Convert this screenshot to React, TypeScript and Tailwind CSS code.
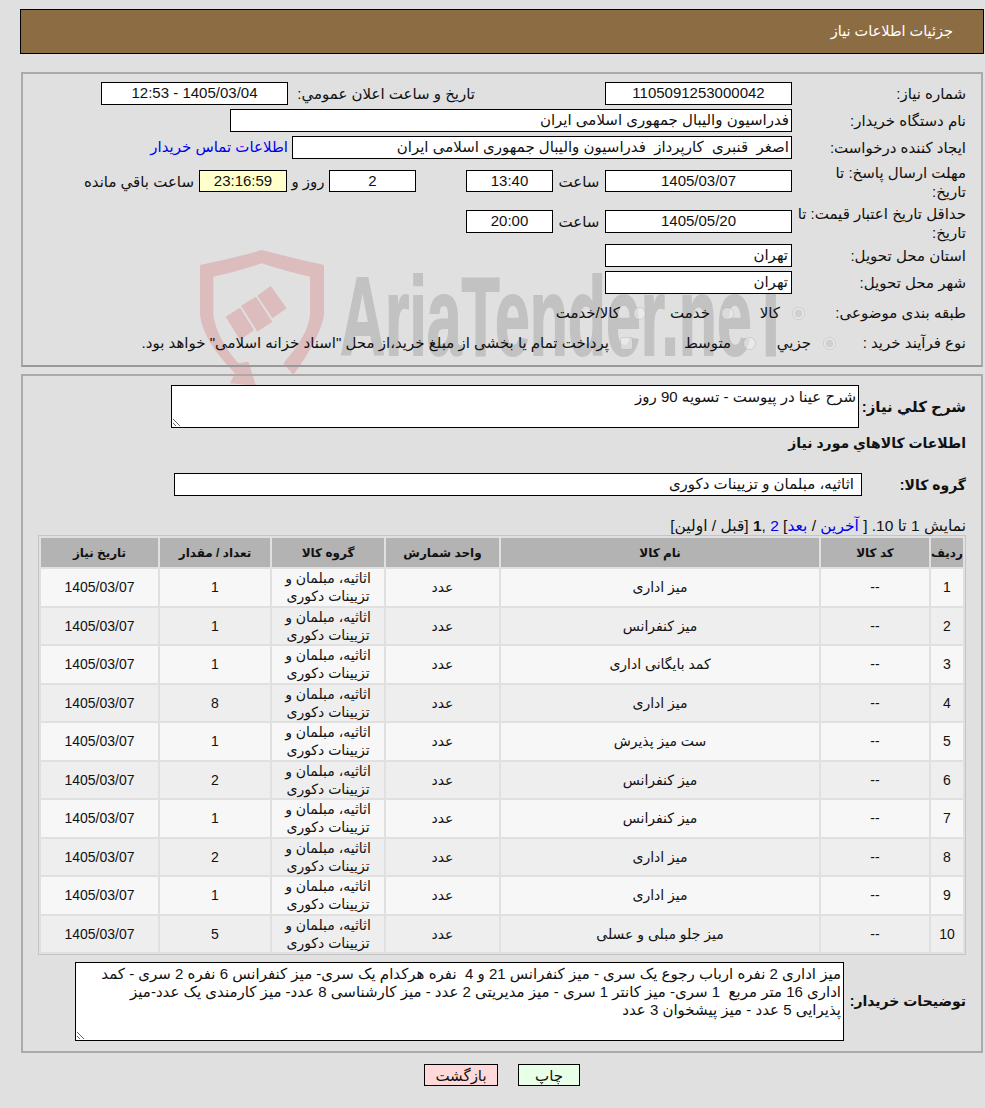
import React from 'react'

const rows = [
  ['1', 'میز اداری', '1'],
  ['2', 'میز کنفرانس', '1'],
  ['3', 'کمد بایگانی اداری', '1'],
  ['4', 'میز اداری', '8'],
  ['5', 'ست میز پذیرش', '1'],
  ['6', 'میز کنفرانس', '2'],
  ['7', 'میز کنفرانس', '1'],
  ['8', 'میز اداری', '2'],
  ['9', 'میز اداری', '1'],
  ['10', 'میز جلو مبلی و عسلی', '5'],
]

function Box({ className, children }: { className: string; children: React.ReactNode }) {
  return <div className={`shrink-0 h-full border border-black flex items-center justify-center ${className}`}>{children}</div>
}

function Watermark() {
  return (
    <div className="absolute left-0 top-0 w-[985px] h-[400px] overflow-hidden" dir="ltr">
      {/* shield + gavel, coordinates taken from the crop */}
      <svg className="absolute left-[180px] top-[235px] w-[260px] h-[160px]" viewBox="0 0 780 480">
        <path
          fill="#dcbcbc"
          d="M60 90 Q160 70 245 45 Q340 70 432 90 L432 240 Q420 310 340 420 L310 385 Q385 300 390 240 L390 125 Q320 110 245 85 Q170 110 100 125 L100 240 Q110 310 175 385 L205 380 L228 452 L150 445 L165 415 Q70 320 60 240 Z"
        />
        <path fill="#dcbcbc" d="M137 245 L180 218 L222 285 L180 315 Z" />
        <path fill="#dcbcbc" d="M183 212 L228 185 L277 260 L232 290 Z" />
        <path fill="#dcbcbc" d="M232 182 L272 153 L320 220 L277 250 Z" />
      </svg>
      <svg className="absolute left-[330px] top-[250px] w-[480px] h-[120px]" viewBox="0 0 480 120">
        <text
          transform="translate(10 105) scale(0.5575 1)"
          fontFamily="'Liberation Sans', sans-serif"
          fontWeight="700"
          fontSize="112"
          fill="#c2c2c2"
          stroke="#c2c2c2"
          strokeWidth="2"
        >
          AriaTender.neT
        </text>
      </svg>
    </div>
  )
}

export default function App() {
  return (
    <div
      dir="rtl"
      className="relative w-[985px] h-[1108px] overflow-hidden bg-[#e0e0e0] text-[15px] text-[#111] font-['Liberation_Sans','DejaVu_Sans',sans-serif]"
    >
      <Watermark />
      <div className="relative pt-[9px]">
        {/* page title */}
        <div className="ml-[20px] mr-px h-[45px] bg-[#8c6c42] border border-black flex items-center pr-[30px] text-white text-[14.5px]">
          جزئیات اطلاعات نیاز
        </div>

        {/* need details */}
        <div className="ml-[21px] mr-[2px] mt-[18px] h-[295px] border-2 border-[#aaa] border-b-[#999] pr-[15px] pt-[8px]">
          <div className="flex items-center h-[23px]">
            <div className="w-[174px] shrink-0 pt-[2px]">شماره نیاز:</div>
            <Box className="w-[187px] bg-white">1105091253000042</Box>
            <div className="w-[130px] shrink-0" />
            <div className="w-[187px] shrink-0 pt-[2px] whitespace-nowrap">تاریخ و ساعت اعلان عمومي:</div>
            <Box className="w-[187px] bg-white">1405/03/04 - 12:53</Box>
          </div>
          <div className="flex items-center h-[23px] mt-[4px]">
            <div className="w-[174px] shrink-0 pt-[2px]">نام دستگاه خریدار:</div>
            <Box className="w-[562px] bg-white !justify-start pr-[2px]">فدراسیون والیبال جمهوری اسلامی ایران</Box>
          </div>
          <div className="flex items-center h-[23px] mt-[4px]">
            <div className="w-[174px] shrink-0 pt-[2px]">ایجاد کننده درخواست:</div>
            <Box className="w-[500px] bg-white !justify-start pr-[2px] whitespace-pre">اصغر  قنبری  کارپرداز  فدراسیون والیبال جمهوری اسلامی ایران</Box>
            <a className="mr-[4px] text-[#0000ee] whitespace-nowrap">اطلاعات تماس خریدار</a>
          </div>
          <div className="flex items-center h-[22px] mt-[11px]">
            <div className="w-[174px] shrink-0 pt-[2px] leading-[19px]">مهلت ارسال پاسخ: تا<br />تاریخ:</div>
            <Box className="w-[187px] bg-white">1405/03/07</Box>
            <div className="w-[52px] shrink-0 pt-[2px] text-center">ساعت</div>
            <Box className="w-[87px] bg-white">13:40</Box>
            <div className="w-[50px] shrink-0" />
            <Box className="w-[87px] bg-white">2</Box>
            <div className="w-[42px] shrink-0 pt-[2px] text-center">روز و</div>
            <Box className="w-[88px] bg-[#ffffcc]">23:16:59</Box>
            <div className="mr-[5px] pt-[2px] whitespace-nowrap">ساعت باقي مانده</div>
          </div>
          <div className="flex items-center h-[23px] mt-[18px]">
            <div className="w-[174px] shrink-0 pt-[2px] leading-[19px]">حداقل تاریخ اعتبار قیمت: تا<br />تاریخ:</div>
            <Box className="w-[187px] bg-white">1405/05/20</Box>
            <div className="w-[52px] shrink-0 pt-[2px] text-center">ساعت</div>
            <Box className="w-[87px] bg-white">20:00</Box>
          </div>
          <div className="flex items-center h-[23px] mt-[11px]">
            <div className="w-[174px] shrink-0 pt-[2px]">استان محل تحویل:</div>
            <Box className="w-[187px] bg-white !justify-start pr-[3px]">تهران</Box>
          </div>
          <div className="flex items-center h-[23px] mt-[4px]">
            <div className="w-[174px] shrink-0 pt-[2px]">شهر محل تحویل:</div>
            <Box className="w-[187px] bg-white !justify-start pr-[3px]">تهران</Box>
          </div>
          <div className="flex items-center h-[22px] mt-[8px]">
            <div className="w-[161px] shrink-0 whitespace-nowrap">طبقه بندی موضوعی:</div>
            <input type="radio" disabled defaultChecked className="m-0 w-[13px] h-[13px] shrink-0 opacity-70" />
            <div className="w-[58px] shrink-0 pr-[12px]">کالا</div>
            <input type="radio" disabled className="m-0 w-[13px] h-[13px] shrink-0 opacity-70" />
            <div className="w-[75px] shrink-0 pr-[11px]">خدمت</div>
            <input type="radio" disabled className="m-0 w-[13px] h-[13px] shrink-0 opacity-70" />
            <div className="pr-[13px] whitespace-nowrap">کالا/خدمت</div>
          </div>
          <div className="flex items-center h-[22px] mt-[8px]">
            <div className="w-[130px] shrink-0 whitespace-nowrap">نوع فرآیند خرید :</div>
            <input type="radio" disabled defaultChecked className="m-0 w-[13px] h-[13px] shrink-0 opacity-70" />
            <div className="w-[67px] shrink-0 pr-[12px]">جزیي</div>
            <input type="radio" disabled className="m-0 w-[13px] h-[13px] shrink-0 opacity-70" />
            <div className="w-[110px] shrink-0 pr-[12px]">متوسط</div>
            <input type="checkbox" disabled className="m-0 w-[13px] h-[13px] shrink-0 opacity-70" />
            <div className="pr-[11px] whitespace-nowrap">پرداخت تمام یا بخشی از مبلغ خرید،از محل "اسناد خزانه اسلامی" خواهد بود.</div>
          </div>
        </div>

        {/* items */}
        <div className="ml-[21px] mr-[2px] mt-[7px] h-[679px] border-2 border-[#aaa] pr-[15px] pt-[9px]">
          <div className="flex items-center h-[43px]">
            <div className="w-[107px] shrink-0 pt-[2px] font-bold">شرح کلي نياز:</div>
            <textarea
              readOnly
              dir="rtl"
              defaultValue="شرح عینا در پیوست - تسویه 90 روز"
              className="block w-[688px] h-[43px] bg-white border border-black px-[2px] py-0 outline-none"
            />
          </div>
          <div className="h-[20px] mt-[5px] font-bold text-[14px] leading-[20px]">اطلاعات کالاهاي مورد نياز</div>
          <div className="flex items-center h-[23px] mt-[20px]">
            <div className="w-[104px] shrink-0 pt-[2px] font-bold text-[14px]">گروه کالا:</div>
            <Box className="w-[688px] bg-white !justify-start pr-[7px]">اثاثیه، مبلمان و تزیینات دکوری</Box>
          </div>
          <div className="h-[18px] mt-[21px] text-[15.5px] leading-[18px] whitespace-nowrap">
            نمایش 1 تا 10. [ <a className="text-[#0000ee]">آخرین</a> / <a className="text-[#0000ee]">بعد</a>] <a className="text-[#0000ee]">2</a> ,<b>1</b> [قبل / اولین]
          </div>
          <table className="w-[928px] table-fixed border-separate border-spacing-[2px] border border-[#c4c4c4] text-center text-[14px]">
            <colgroup>
              <col className="w-[32px]" />
              <col className="w-[108px]" />
              <col className="w-[318px]" />
              <col className="w-[113px]" />
              <col className="w-[112px]" />
              <col className="w-[110px]" />
              <col className="w-[117px]" />
            </colgroup>
            <thead>
              <tr className="h-[29px] bg-[#b3b3b3]">
                {['ردیف', 'کد کالا', 'نام کالا', 'واحد شمارش', 'گروه کالا', 'تعداد / مقدار', 'تاریخ نیاز'].map((h) => (
                  <th key={h} className="p-0 font-bold text-[12px] whitespace-nowrap">{h}</th>
                ))}
              </tr>
            </thead>
            <tbody>
              {rows.map((r, i) => (
                <tr key={r[0]} className={`h-[36.5px] leading-[18px] ${i % 2 === 0 ? 'bg-[#f7f7f7]' : 'bg-[#eeeeee]'}`}>
                  <td className="p-0">{r[0]}</td>
                  <td className="p-0">--</td>
                  <td className="p-0">{r[1]}</td>
                  <td className="p-0">عدد</td>
                  <td className="p-0">اثاثیه، مبلمان و تزیینات دکوری</td>
                  <td className="p-0">{r[2]}</td>
                  <td className="p-0">1405/03/07</td>
                </tr>
              ))}
            </tbody>
          </table>
          <div className="flex items-center h-[79px] mt-[7px]">
            <div className="w-[122px] shrink-0 font-bold text-[14px] whitespace-nowrap">توضیحات خریدار:</div>
            <textarea
              readOnly
              dir="rtl"
              defaultValue="میز اداری 2 نفره ارباب رجوع یک سری - میز کنفرانس 21 و 4  نفره هرکدام یک سری- میز کنفرانس 6 نفره 2 سری - کمد اداری 16 متر مربع  1 سری- میز کانتر 1 سری - میز مدیریتی 2 عدد - میز کارشناسی 8 عدد- میز کارمندی یک عدد-میز پذیرایی 5 عدد - میز پیشخوان 3 عدد"
              className="block w-[769px] h-[79px] bg-white border border-black pr-[2px] pl-[8px] pt-[2px] pb-0 leading-[18px] outline-none"
            />
          </div>
        </div>

        {/* actions */}
        <div className="flex gap-[20px] h-[22px] mt-[11px] pr-[405px]">
          <button className="w-[62px] h-full bg-[#e8ffe8] border border-black">چاپ</button>
          <button className="w-[74px] h-full bg-[#ffd9d9] border border-black">بازگشت</button>
        </div>
      </div>
    </div>
  )
}
